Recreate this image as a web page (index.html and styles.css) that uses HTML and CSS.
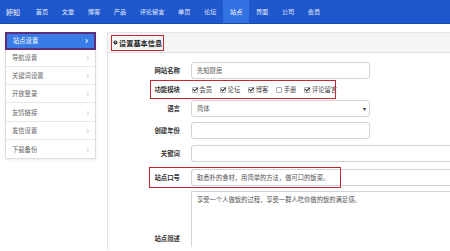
FILE: index.html
```html
<!DOCTYPE html>
<html lang="zh">
<head>
<meta charset="utf-8">
<title>站点设置</title>
<link rel="stylesheet" href="styles.css">
</head>
<body>
<nav class="topnav">
  <span class="brand">婷知</span>
  <a class="nav-item">首页</a>
  <a class="nav-item">文章</a>
  <a class="nav-item">博客</a>
  <a class="nav-item">产品</a>
  <a class="nav-item">评论留言</a>
  <a class="nav-item">单页</a>
  <a class="nav-item">论坛</a>
  <a class="nav-item active">站点</a>
  <a class="nav-item">界面</a>
  <a class="nav-item">公司</a>
  <a class="nav-item">会员</a>
</nav>
<div class="main">
  <aside class="sidebar">
    <div class="side-item active"><span>站点设置</span><span class="chev">›</span></div>
    <div class="side-item"><span>导航设置</span><span class="chev">›</span></div>
    <div class="side-item"><span>关键词设置</span><span class="chev">›</span></div>
    <div class="side-item"><span>开放登录</span><span class="chev">›</span></div>
    <div class="side-item"><span>友情链接</span><span class="chev">›</span></div>
    <div class="side-item"><span>发信设置</span><span class="chev">›</span></div>
    <div class="side-item last"><span>下载备份</span><span class="chev">›</span></div>
  </aside>
  <section class="panel">
    <div class="panel-head">
      <div class="head-box">
        <svg class="head-icon" viewBox="0 0 10 10" width="5" height="5"><circle cx="5" cy="5" r="4" fill="#333"/><path d="M5 2.5V5h2" stroke="#fff" stroke-width="1.2" fill="none"/></svg>
        <span>设置基本信息</span>
      </div>
    </div>
    <div class="form">
      <div class="row r1">
        <label class="lbl">网站名称</label>
        <div class="input w-mid">先知厨房</div>
      </div>
      <div class="row r2">
        <label class="lbl">功能模块</label>
        <div class="checks">
          <span class="chk"><span class="cb on"></span>会员</span>
          <span class="chk"><span class="cb on"></span>论坛</span>
          <span class="chk"><span class="cb on"></span>博客</span>
          <span class="chk"><span class="cb"></span>手册</span>
          <span class="chk"><span class="cb on"></span>评论留言</span>
        </div>
        <span class="mark mark-mod"></span>
      </div>
      <div class="row r3">
        <label class="lbl">语言</label>
        <div class="input w-mid select"><span>简体</span><span class="arrow">▾</span></div>
      </div>
      <div class="row r4">
        <label class="lbl">创建年份</label>
        <div class="input w-mid"></div>
      </div>
      <div class="row r5">
        <label class="lbl">关键词</label>
        <div class="input w-full"></div>
      </div>
      <div class="row r6">
        <label class="lbl">站点口号</label>
        <div class="input w-full">取悉朴的食材，用简单的方法，做可口的饭菜。</div>
        <span class="mark mark-slogan"></span>
      </div>
      <div class="row r7">
        <label class="lbl">站点简述</label>
        <div class="textarea">享受一个人做饭的过程，享受一群人吃你做的饭的满足感。</div>
      </div>
    </div>
  </section>
</div>
</body>
</html>
```

FILE: styles.css
```css
html, body {
  margin: 0;
  padding: 0;
  overflow: hidden;
  background: #fff;
}
body {
  font-family: "Noto Sans CJK SC", "Noto Sans", sans-serif;
  color: #444;
  width: 450px;
  height: 251px;
}
.topnav {
  height: 24px;
  background: #1f58cc;
  display: flex;
  align-items: stretch;
  border-bottom: 1px solid #1a4aa8;
  box-sizing: border-box;
}
.brand {
  color: #fff;
  font-size: 7px;
  line-height: 24px;
  padding: 0 9px 0 6px;
}
.nav-item {
  color: #e4ebff;
  font-size: 6.2px;
  line-height: 23px;
  padding: 0 6.8px;
}
.nav-item.active {
  background: #3271e2;
  color: #fff;
}
.main {
  display: flex;
  align-items: flex-start;
  padding: 8px 0 0 5px;
}
.sidebar {
  width: 91px;
  flex: none;
  border: 1px solid #ddd;
  background: #fff;
  box-shadow: 0 1px 2px rgba(0,0,0,0.08);
  box-sizing: border-box;
}
.side-item {
  height: 18.3px;
  box-sizing: border-box;
  display: flex;
  align-items: center;
  justify-content: space-between;
  padding: 0 6px 0 6px;
  font-size: 6.3px;
  color: #666;
  border-bottom: 1px solid #e8e8e8;
}
.side-item.last { border-bottom: none; }
.side-item.active {
  background: #3a7ce6;
  color: #fff;
  border: 2px solid #5d2f7a;
  margin: -1px;
  height: 17.5px;
}
.chev {
  font-size: 9px;
  line-height: 1;
  color: #bbb;
}
.side-item.active .chev {
  color: #fff;
  font-weight: bold;
}
.panel {
  flex: 1;
  margin-left: 11px;
  border-left: 1px solid #e6e6e6;
  border-top: 1px solid #e6e6e6;
  height: 218px;
  box-sizing: border-box;
}
.panel-head {
  height: 19px;
  background: #f5f5f5;
  border-bottom: 1px solid #e2e2e2;
  display: flex;
  align-items: center;
  padding-left: 3px;
}
.head-box {
  height: 16px;
  box-sizing: border-box;
  border: 1.5px solid #c0282d;
  display: flex;
  align-items: center;
  gap: 1px;
  padding: 0 1px 0 1px;
  font-size: 7.2px;
  font-weight: bold;
  color: #222;
}
.head-icon { flex: none; }
.form {
  padding-top: 9px;
}
.row {
  position: relative;
  display: flex;
  align-items: center;
  height: 17px;
}
.r2, .r3 { margin-top: 2px; }
.r4 { margin-top: 5px; }
.r5 { margin-top: 6px; }
.r6 { margin-top: 7px; height: 17px; }
.r7 { margin-top: 5px; height: 56px; }
.lbl {
  width: 75px;
  flex: none;
  box-sizing: border-box;
  padding-right: 3px;
  text-align: right;
  font-size: 6.4px;
  font-weight: bold;
  color: #333;
  margin-right: 8px;
}
.input {
  height: 17px;
  box-sizing: border-box;
  border: 1px solid #d4d4d4;
  border-radius: 3px;
  background: #fff;
  font-size: 6.3px;
  color: #555;
  display: flex;
  align-items: center;
  padding: 0 5px;
}
.w-mid { width: 179px; }
.w-full { flex: 1; border-right: none; border-radius: 3px 0 0 3px; }
.select { justify-content: space-between; padding-right: 3px; }
.arrow { font-size: 6px; color: #333; }
.checks {
  display: flex;
  align-items: center;
  font-size: 6.3px;
  color: #444;
  padding-left: 1px;
}
.chk {
  display: inline-flex;
  align-items: center;
  margin-right: 8px;
}
.cb {
  width: 4px;
  height: 4px;
  border: 1px solid #aaa;
  border-radius: 1px;
  margin-right: 1.5px;
  position: relative;
  background: #fff;
}
.cb.on::after {
  content: "";
  position: absolute;
  left: 1px;
  top: -1.5px;
  width: 1.6px;
  height: 4px;
  border: solid #222;
  border-width: 0 1.2px 1.2px 0;
  transform: rotate(45deg);
}
.mark {
  position: absolute;
  border: 1.5px solid #c0282d;
  box-sizing: border-box;
  pointer-events: none;
}
.mark-mod {
  left: 42px;
  width: 186px;
  top: -1px;
  height: 19px;
}
.mark-slogan {
  left: 41px;
  width: 192px;
  top: -2px;
  height: 21px;
}
.r7 .lbl { align-self: flex-end; margin-bottom: 4px; }
.textarea {
  flex: 1;
  align-self: stretch;
  border: 1px solid #d4d4d4;
  border-right: none;
  border-bottom: none;
  font-size: 6.3px;
  color: #555;
  padding: 3px 5px;
}
```
